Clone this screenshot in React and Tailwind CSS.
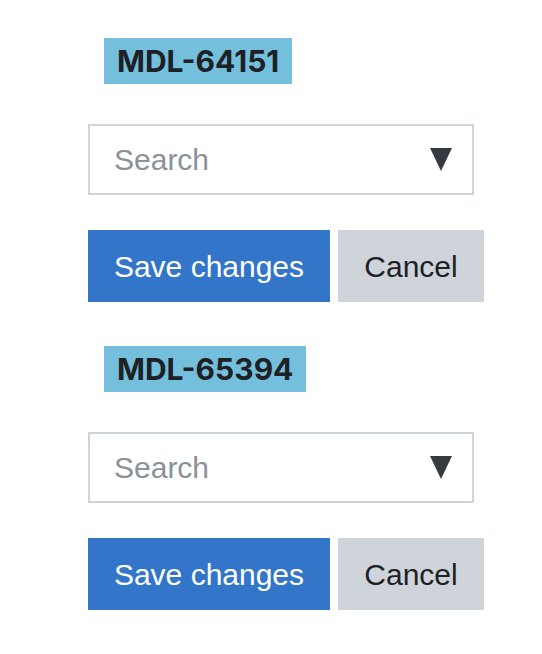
import React from 'react';

const items = ['MDL-64151', 'MDL-65394'];

function Block({ id }) {
  return (
    <div className="flex flex-col">
      <div className="pl-4 pt-2">
        <span className="inline-block bg-[#74bfdb] px-[13px] text-[30px] leading-[46px] font-bold text-[#1d2125]" style={{ fontFamily: 'Inter, sans-serif' }}>{id}</span>
      </div>
      <div className="mt-[40px] flex h-[71px] w-[386px] items-center justify-between border-2 border-[#ced4da] pl-[24px] pr-[20px]">
        <span className="text-[30px] text-[#8a9199]">Search</span>
        <svg width="22" height="23" viewBox="0 0 22 23">
          <polygon points="0,0 22,0 11,23" fill="#343a40" />
        </svg>
      </div>
      <div className="mt-[35px] flex gap-2">
        <button className="h-[72px] w-[242px] bg-[#3376c9] text-[30px] text-white">Save changes</button>
        <button className="h-[72px] w-[146px] bg-[#ced4da] text-[30px] text-[#1d2125]">Cancel</button>
      </div>
    </div>
  );
}

export default function App() {
  return (
    <div className="flex flex-col gap-[36px] pl-[88px] pt-[30px]" style={{ fontFamily: '"Liberation Sans", Arial, sans-serif' }}>
      {items.map((id) => (
        <Block key={id} id={id} />
      ))}
    </div>
  );
}
